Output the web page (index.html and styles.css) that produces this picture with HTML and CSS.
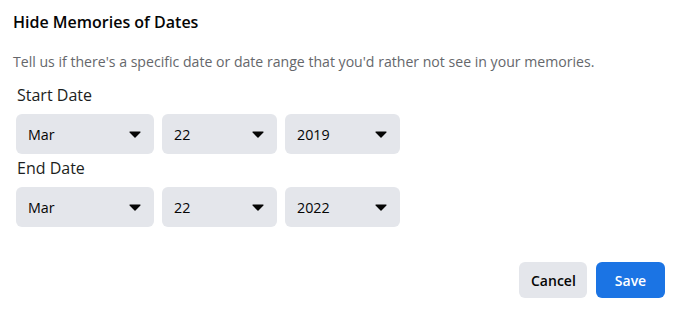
FILE: index.html
```html
<!DOCTYPE html>
<html>
<head>
<meta charset="utf-8">
<link rel="stylesheet" href="styles.css">
</head>
<body>
<div class="dialog">
  <h1 class="title">Hide Memories of Dates</h1>
  <p class="desc">Tell us if there's a specific date or date range that you'd rather not see in your memories.</p>
  <div class="form">
    <div class="label">Start Date</div>
    <div class="row">
      <div class="select month"><span>Mar</span><svg class="caret" viewBox="0 0 12 7" width="12" height="7"><path d="M1 0.5h10a.6.6 0 0 1 .45 1L6.5 6.4a.7.7 0 0 1-1 0L.55 1.5A.6.6 0 0 1 1 .5z"/></svg></div>
      <div class="select day"><span>22</span><svg class="caret" viewBox="0 0 12 7" width="12" height="7"><path d="M1 0.5h10a.6.6 0 0 1 .45 1L6.5 6.4a.7.7 0 0 1-1 0L.55 1.5A.6.6 0 0 1 1 .5z"/></svg></div>
      <div class="select year"><span>2019</span><svg class="caret" viewBox="0 0 12 7" width="12" height="7"><path d="M1 0.5h10a.6.6 0 0 1 .45 1L6.5 6.4a.7.7 0 0 1-1 0L.55 1.5A.6.6 0 0 1 1 .5z"/></svg></div>
    </div>
    <div class="label">End Date</div>
    <div class="row">
      <div class="select month"><span>Mar</span><svg class="caret" viewBox="0 0 12 7" width="12" height="7"><path d="M1 0.5h10a.6.6 0 0 1 .45 1L6.5 6.4a.7.7 0 0 1-1 0L.55 1.5A.6.6 0 0 1 1 .5z"/></svg></div>
      <div class="select day"><span>22</span><svg class="caret" viewBox="0 0 12 7" width="12" height="7"><path d="M1 0.5h10a.6.6 0 0 1 .45 1L6.5 6.4a.7.7 0 0 1-1 0L.55 1.5A.6.6 0 0 1 1 .5z"/></svg></div>
      <div class="select year"><span>2022</span><svg class="caret" viewBox="0 0 12 7" width="12" height="7"><path d="M1 0.5h10a.6.6 0 0 1 .45 1L6.5 6.4a.7.7 0 0 1-1 0L.55 1.5A.6.6 0 0 1 1 .5z"/></svg></div>
    </div>
  </div>
  <div class="footer">
    <button class="btn cancel">Cancel</button>
    <button class="btn save">Save</button>
  </div>
</div>
</body>
</html>
```
FILE: styles.css
```css
* { box-sizing: border-box; }
html, body { margin: 0; padding: 0; background: #fff; }
body {
  font-family: "Open Sans", "Noto Sans", "Liberation Sans", sans-serif;
  color: #050505;
  width: 673px;
  height: 312px;
  overflow: hidden;
}
.dialog { padding: 11px 8px 0 13px; }
.title {
  margin: 0;
  font-size: 16px;
  font-weight: 600;
  line-height: 22px;
  color: #050505;
}
.desc {
  margin: 19px 0 0;
  font-size: 14.1px;
  line-height: 20px;
  color: #65676b;
}
.form { padding: 10px 0 0 3px; }
.label {
  font-size: 16px;
  line-height: 26px;
  padding-left: 1px;
  color: #1c1e21;
}
.row {
  display: flex;
  gap: 8px;
  margin-top: 6px;
  margin-bottom: 1px;
}
.select {
  display: flex;
  align-items: center;
  justify-content: space-between;
  height: 40px;
  background: #e4e6eb;
  border-radius: 6px;
  padding: 0 13px 0 12px;
  font-size: 14.3px;
  font-weight: 500;
}
.month { width: 138px; }
.day { width: 115px; }
.year { width: 115px; }
.caret { fill: #050505; display: block; }
.footer {
  display: flex;
  justify-content: flex-end;
  gap: 9px;
  margin-top: 35px;
}
.btn {
  height: 36px;
  border: 0;
  border-radius: 6px;
  font-family: inherit;
  font-size: 14px;
  font-weight: 600;
  padding: 0 12px;
}
.cancel { background: #e4e6eb; color: #050505; width: 68px; }
.save { background: #1b74e4; color: #fff; width: 69px; }
```
